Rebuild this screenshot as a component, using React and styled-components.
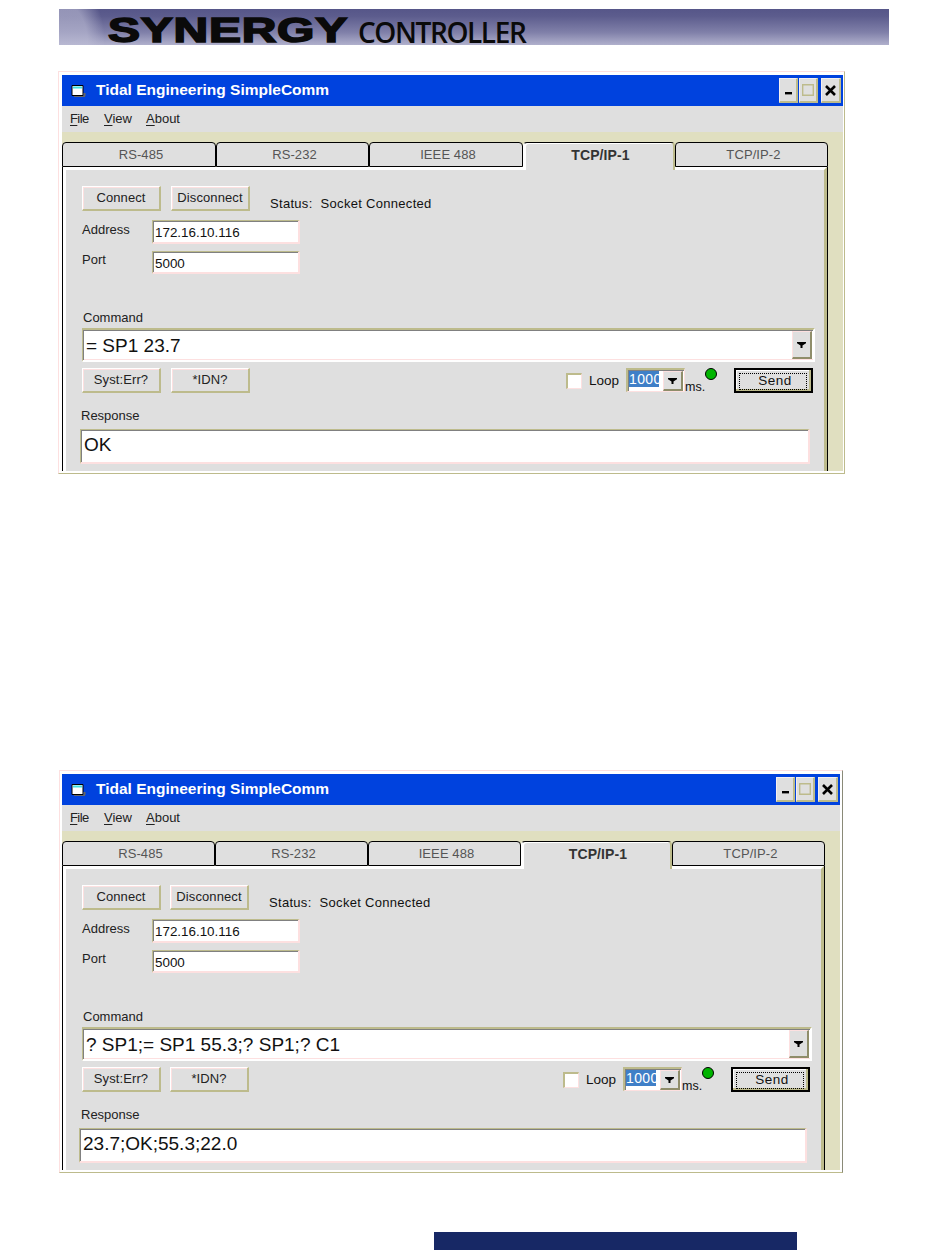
import React from "react";
import styled, { createGlobalStyle } from "styled-components";

const Global = createGlobalStyle`
  html, body { margin: 0; padding: 0; background: #fff; }
  body { font-family: "Liberation Sans", Arial, sans-serif; color: #111; }
`;

const OLIVE = "#bdbb8c";
const PINK = "#fde0e0";
const GRAY = "#dfdfdf";
const BEIGE = "#e0dfc0";

const Page = styled.div`
  width: 950px;
  height: 1260px;
  padding-top: 9px;
  box-sizing: border-box;
  overflow: hidden;
`;

const Banner = styled.header`
  width: 830px;
  height: 36px;
  margin-left: 59px;
  display: flex;
  align-items: flex-end;
  background:
    radial-gradient(ellipse 46px 68px at 0 34px, rgba(190,190,214,0.6) 0 62%, rgba(190,190,214,0) 100%) no-repeat,
    linear-gradient(180deg, #565689 0%, #5c5c8d 20%, #8080a9 65%, #b0b0cc 100%);
`;

const Synergy = styled.span`
  display: block;
  width: 250px;
  height: 30px;
  margin-left: 49px;
  margin-bottom: -1px;
  font: 900 33px/30px "Liberation Sans", Arial, sans-serif;
  color: #0a0a0a;
  -webkit-text-stroke: 1.5px #0a0a0a;
  letter-spacing: 0.5px;
  transform-origin: 0 50%;
  transform: scale(1.455, 1.04);
  white-space: nowrap;
`;

const Controller = styled.span`
  display: block;
  font: 600 28px/26px "Open Sans", sans-serif;
  color: #0a0a0a;
  letter-spacing: -1.4px;
  white-space: nowrap;
`;

const Win = styled.section`
  box-sizing: border-box;
  width: ${(p) => p.$width}px;
  height: 403px;
  margin-left: ${(p) => p.$left}px;
  margin-top: ${(p) => p.$top}px;
  padding: 3px ${(p) => p.$padR}px 0 ${(p) => p.$pad}px;
  border-top: 1px solid ${PINK};
  border-left: 1px solid ${PINK};
  border-right: 1px solid ${(p) => p.$edge};
  border-bottom: 1px solid ${OLIVE};
  background: #fff;
`;

const TitleBar = styled.div`
  height: 31px;
  background: #0042de;
  display: flex;
  align-items: center;
  padding-left: 9px;
`;

const AppIcon = styled.svg`
  width: 17px;
  height: 14px;
  margin-right: 8px;
  flex: none;
`;

const TitleText = styled.h1`
  margin: 0 0 2px;
  color: #fff;
  font: 700 15.5px/20px "Liberation Sans", Arial, sans-serif;
  white-space: nowrap;
`;

const WinButtons = styled.div`
  margin-left: auto;
  display: flex;
  padding-right: 2px;
`;

const WinButton = styled.div`
  box-sizing: border-box;
  width: ${(p) => p.$w}px;
  height: 25px;
  margin-left: ${(p) => p.$gap}px;
  background: ${GRAY};
  border-top: 1px solid #f6efef;
  border-left: 1px solid #f6efef;
  border-right: 2px solid ${OLIVE};
  border-bottom: 2px solid ${OLIVE};
  display: flex;
  align-items: center;
  justify-content: center;
`;

const Menu = styled.nav`
  box-sizing: border-box;
  height: 26px;
  padding: 0 0 2px 8px;
  background: ${GRAY};
  display: flex;
  align-items: center;
  gap: 16px;
  font-size: 13px;
  color: #222;
`;

const MenuItem = styled.span`
  width: ${(p) => p.$w}px;
  letter-spacing: ${(p) => p.$ls || 0}px;
  white-space: nowrap;
  & > u { text-underline-offset: 2px; }
`;

const Body = styled.div`
  background: ${BEIGE};
  padding-top: 10px;
  padding-right: 15px;
`;

const Tabs = styled.div`
  display: grid;
  grid-template-columns: ${(p) => p.$cols};
  height: 24px;
`;

const Tab = styled.div`
  box-sizing: border-box;
  position: relative;
  z-index: ${(p) => (p.$active ? 1 : 0)};
  height: ${(p) => (p.$active ? 28 : 25)}px;
  background: ${GRAY};
  border-top: 1px solid #000;
  border-left: 1px solid ${(p) => (p.$active ? "#fff" : "#000")};
  border-right: ${(p) => (p.$active ? `2px solid ${OLIVE}` : "1px solid #000")};
  border-bottom: ${(p) => (p.$active ? "none" : "1px solid #000")};
  border-radius: 4px 4px 0 0;
  box-shadow: ${(p) => (p.$active ? "inset 2px 1px 0 #fff" : "none")};
  display: flex;
  justify-content: center;
  padding: 4px 0 0 4px;
  font-size: ${(p) => (p.$active ? 14 : 13)}px;
  line-height: 16px;
  letter-spacing: 0.1px;
  color: ${(p) => (p.$active ? "#333" : "#555")};
  font-weight: ${(p) => (p.$active ? 700 : 400)};
`;

const Panel = styled.div`
  box-sizing: border-box;
  border-left: 1px solid #000;
  border-right: 1px solid #000;
  margin-top: 1px;
`;

const Inner = styled.div`
  background: ${GRAY};
  border-top: 3px solid #fff;
  border-left: 3px solid #fff;
  border-right: 3px solid ${OLIVE};
  padding: 16px 0 7px 16px;
`;

const Row = styled.div`
  display: flex;
  align-items: flex-start;
  height: ${(p) => p.$h}px;
  margin-top: ${(p) => p.$mt || 0}px;
`;

const Btn = styled.button`
  box-sizing: border-box;
  width: 79px;
  height: 25px;
  padding: 0 0 1px;
  margin: 0 ${(p) => p.$mr || 0}px 0 0;
  background: ${GRAY};
  border-top: 1px solid #fff;
  border-left: 1px solid #fff;
  border-right: 2px solid ${OLIVE};
  border-bottom: 2px solid ${OLIVE};
  box-shadow: inset 1px 1px 0 ${PINK};
  font: 13px/16px "Liberation Sans", Arial, sans-serif;
  color: #222;
  letter-spacing: 0.1px;
`;

const Status = styled.div`
  display: flex;
  gap: 8px;
  margin: 10px 0 0 20px;
  font-size: 13px;
  line-height: 16px;
  letter-spacing: 0.3px;
  white-space: nowrap;
`;

const FieldLabel = styled.label`
  display: block;
  width: 70px;
  margin-top: ${(p) => p.$mt}px;
  font-size: 13px;
  line-height: 16px;
  color: #222;
`;

const TextField = styled.div`
  box-sizing: border-box;
  width: 148px;
  height: ${(p) => p.$h}px;
  background: #fff;
  border-top: 1px solid ${OLIVE};
  border-left: 1px solid ${OLIVE};
  border-right: 2px solid ${PINK};
  border-bottom: 2px solid ${PINK};
  box-shadow: inset 1px 1px 0 #808080;
  padding: 3px 0 0 2px;
  font-size: 13.4px;
  line-height: 17px;
`;

const BlockLabel = styled.div`
  margin: ${(p) => p.$mt}px 0 ${(p) => p.$mb}px ${(p) => p.$indent}px;
  font-size: 13px;
  line-height: 14px;
  color: #222;
`;

const Combo = styled.div`
  box-sizing: border-box;
  display: flex;
  align-items: center;
  height: 34px;
  margin-right: 9px;
  background: #fff;
  border-top: 2px solid ${OLIVE};
  border-left: 1px solid ${OLIVE};
  border-right: 2px solid #fff;
  border-bottom: 2px solid #fff;
  box-shadow: inset 0 1px 0 #808080, inset 1px 0 0 #808080, inset 0 -1px 0 ${PINK};
  padding-left: 3px;
  font-size: 19px;
`;

const ComboText = styled.span`
  flex: 1;
  padding-top: 1px;
`;

const DropBtn = styled.div`
  box-sizing: border-box;
  flex: none;
  width: ${(p) => p.$w}px;
  height: ${(p) => p.$h}px;
  margin-right: 1px;
  background: ${GRAY};
  border-top: 1px solid ${PINK};
  border-left: 1px solid ${PINK};
  border-right: 2px solid #8f8d6a;
  border-bottom: 2px solid #8f8d6a;
  display: flex;
  align-items: center;
  justify-content: center;
`;

const Arrow = () => (
  <svg width="9" height="6" viewBox="0 0 9 6">
    <path d="M0 0h9v1.2L5.5 3.6V6h-2V3.6L0 1.2z" fill="#000" />
  </svg>
);

const Controls = styled.div`
  margin-left: auto;
  margin-right: 11px;
  display: flex;
  align-items: flex-start;
`;

const Check = styled.div`
  box-sizing: border-box;
  width: 16px;
  height: 16px;
  margin-top: 5px;
  background: #fff;
  border-top: 2px solid ${OLIVE};
  border-left: 2px solid ${OLIVE};
  border-right: 1px solid ${PINK};
  border-bottom: 1px solid ${PINK};
`;

const LoopText = styled.span`
  width: 37px;
  margin: 5px 0 0 7px;
  font-size: 13.5px;
  line-height: 16px;
`;

const Spinner = styled.div`
  box-sizing: border-box;
  display: flex;
  width: 59px;
  height: 24px;
  background: #fff;
  border-top: 2px solid ${OLIVE};
  border-left: 2px solid ${OLIVE};
  border-right: 1px solid ${PINK};
  border-bottom: 1px solid ${PINK};
  box-shadow: inset 1px 1px 0 #808080;
  padding: 1px 0 0 1px;
`;

const Selected = styled.span`
  width: 30px;
  height: 16px;
  overflow: hidden;
  background: #3f7fc7;
  color: #fff;
  font-size: 14px;
  line-height: 17px;
  letter-spacing: 0.4px;
  margin-right: 4px;
  white-space: nowrap;
`;

const Ms = styled.span`
  width: 20px;
  margin-top: 11px;
  font-size: 12.5px;
  line-height: 16px;
`;

const Led = styled.span`
  box-sizing: border-box;
  width: 12px;
  height: 12px;
  margin-right: 17px;
  border-radius: 50%;
  background: #00b400;
  border: 1px solid #000;
`;

const SendBtn = styled.button`
  box-sizing: border-box;
  width: 79px;
  height: 25px;
  padding: 2px;
  margin: 0;
  background: ${GRAY};
  border: 2px solid #000;
  box-shadow: inset -2px -2px 0 ${OLIVE}, inset 1px 1px 0 #fff;
  font: 13.5px/16px "Liberation Sans", Arial, sans-serif;
  color: #111;
`;

const Dotted = styled.span`
  display: flex;
  align-items: center;
  justify-content: center;
  box-sizing: border-box;
  height: 100%;
  margin: 1px 2px 0 1px;
  padding: 0 0 2px 4px;
  border: 1px dotted #000;
  letter-spacing: 0.5px;
`;

const ResponseBox = styled.div`
  box-sizing: border-box;
  display: flex;
  align-items: center;
  height: 35px;
  margin-left: ${(p) => p.$ml}px;
  margin-right: 14px;
  background: #fff;
  border-top: 1px solid ${OLIVE};
  border-left: 1px solid ${OLIVE};
  border-right: 2px solid ${PINK};
  border-bottom: 2px solid ${PINK};
  box-shadow: inset 1px 1px 0 #808080;
  padding: 0 0 2px 3px;
  font-size: 19px;
`;

const Footer = styled.div`
  width: 363px;
  height: 18px;
  margin: 59px 0 0 434px;
  background: #172865;
`;

const WindowIcon = () => (
  <AppIcon viewBox="0 0 17 14">
    <path d="M1 1.5h11v10H1z" fill="#fff" stroke="#000" />
    <path d="M2 2.5h9v2H2z" fill="#3fe0e0" />
    <path d="M12.5 9h2v3h-2zM3 12h11v1H3z" fill="#666" />
  </AppIcon>
);

const TABS = ["RS-485", "RS-232", "IEEE 488", "TCP/IP-1", "TCP/IP-2"];

function SimpleComm({ m, command, response }) {
  return (
    <Win $width={m.width} $left={m.left} $top={m.top} $pad={m.pad} $padR={m.padR} $edge={m.edge}>
      <TitleBar>
        <WindowIcon />
        <TitleText>Tidal Engineering SimpleComm</TitleText>
        <WinButtons>
          <WinButton $w={19} $gap={0}>
            <svg width="9" height="9" viewBox="0 0 9 9"><path d="M1 6h7v2.4H1z" fill="#000" /></svg>
          </WinButton>
          <WinButton $w={19} $gap={1}>
            <svg width="12" height="12" viewBox="0 0 12 12"><path d="M.7.7h10.6v10.6H.7z" fill="none" stroke={OLIVE} strokeWidth="1.4" /></svg>
          </WinButton>
          <WinButton $w={20} $gap={3}>
            <svg width="11" height="11" viewBox="0 0 11 11"><path d="M1 1l9 9M10 1l-9 9" stroke="#000" strokeWidth="2.6" /></svg>
          </WinButton>
        </WinButtons>
      </TitleBar>
      <Menu>
        <MenuItem $w={18} $ls={-0.6}><u>F</u>ile</MenuItem>
        <MenuItem $w={26}><u>V</u>iew</MenuItem>
        <MenuItem $w={35}><u>A</u>bout</MenuItem>
      </Menu>
      <Body>
        <Tabs $cols={m.tabs}>
          {TABS.map((t, i) => (
            <Tab key={t} $active={i === 3}>{t}</Tab>
          ))}
        </Tabs>
        <Panel>
          <Inner>
            <Row $h={25}>
              <Btn $mr={m.btnGap}>Connect</Btn>
              <Btn>Disconnect</Btn>
              <Status><span>Status:</span><span>Socket Connected</span></Status>
            </Row>
            <Row $h={24} $mt={9}>
              <FieldLabel $mt={2}>Address</FieldLabel>
              <TextField $h={24}>172.16.10.116</TextField>
            </Row>
            <Row $h={23} $mt={7}>
              <FieldLabel $mt={1}>Port</FieldLabel>
              <TextField $h={23}>5000</TextField>
            </Row>
            <BlockLabel $mt={37} $mb={3} $indent={1}>Command</BlockLabel>
            <Combo>
              <ComboText>{command}</ComboText>
              <DropBtn $w={20} $h={28}><Arrow /></DropBtn>
            </Combo>
            <Row $h={25} $mt={6}>
              <Btn $mr={m.btnGap}>Syst:Err?</Btn>
              <Btn>*IDN?</Btn>
              <Controls>
                <Check />
                <LoopText>Loop</LoopText>
                <Spinner>
                  <Selected>1000</Selected>
                  <DropBtn $w={20} $h={20}><Arrow /></DropBtn>
                </Spinner>
                <Ms>ms.</Ms>
                <Led />
                <SendBtn><Dotted>Send</Dotted></SendBtn>
              </Controls>
            </Row>
            <BlockLabel $mt={16} $mb={6} $indent={-1}>Response</BlockLabel>
            <ResponseBox $ml={m.respLeft}>{response}</ResponseBox>
          </Inner>
        </Panel>
      </Body>
    </Win>
  );
}

const FIRST = { width: 787, left: 58, top: 26, pad: 3, padR: 1, edge: OLIVE, tabs: "154px 153px 154px 152px 153px", respLeft: -2, btnGap: 10 };
const SECOND = { width: 784, left: 59, top: 296, pad: 2, padR: 2, edge: "#8a8a78", tabs: "153px 153px 153px 151px 153px", respLeft: -3, btnGap: 9 };

export default function App() {
  return (
    <Page>
      <Global />
      <Banner>
        <Synergy>SYNERGY</Synergy>
        <Controller>CONTROLLER</Controller>
      </Banner>
      <SimpleComm m={FIRST} command="= SP1 23.7" response="OK" />
      <SimpleComm m={SECOND} command="? SP1;= SP1 55.3;? SP1;? C1" response="23.7;OK;55.3;22.0" />
      <Footer />
    </Page>
  );
}
